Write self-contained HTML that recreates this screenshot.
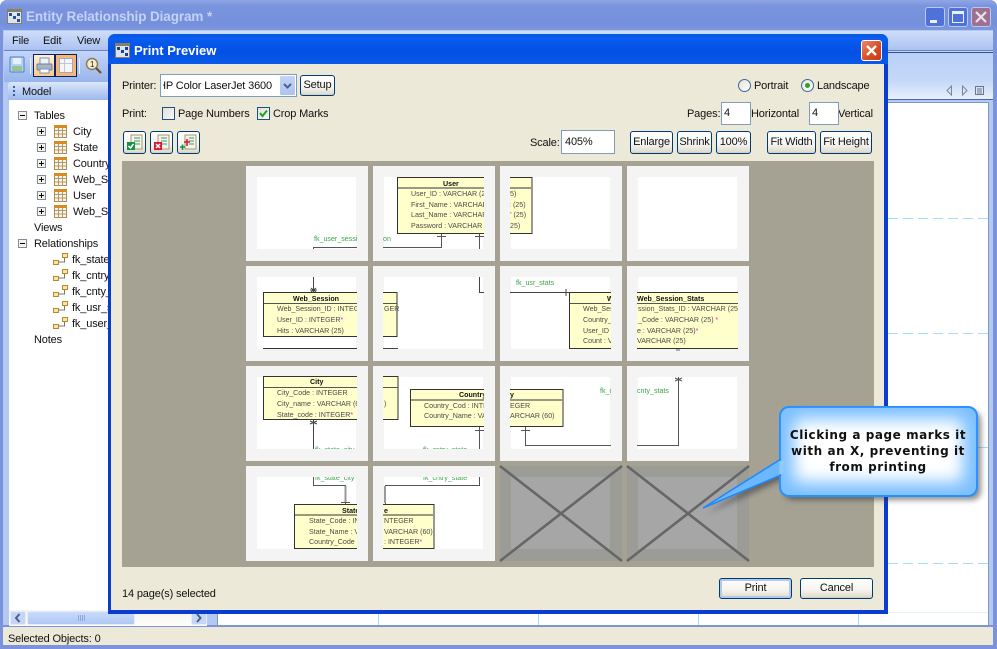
<!DOCTYPE html>
<html><head><meta charset="utf-8">
<style>
html,body{margin:0;padding:0;width:997px;height:649px;overflow:hidden;background:#fff}
*{box-sizing:border-box}
body{font:11px "Liberation Sans",sans-serif;color:#000;position:relative}
.a{position:absolute}
.t{position:absolute;white-space:nowrap;line-height:14px;font-size:11px;letter-spacing:-.15px;color:#111;margin-top:1px}
.b{position:absolute;border:1px solid #003c74;border-radius:3px;background:linear-gradient(#fff,#f4f3ee 60%,#dcd8ca);text-align:center;font-size:11px;letter-spacing:-.15px;color:#111;white-space:nowrap;box-shadow:inset 0 -1px 0 #d6d0c5;padding-top:1px}
.i{position:absolute;background:#fff;border:1px solid #7f9db9;font-size:11px;padding-left:3px;letter-spacing:-.15px;color:#111;padding-top:1px}
svg text{font-family:"Liberation Sans",sans-serif;font-size:7.1px;fill:#4a4a4a}
svg text.h{font-weight:bold;fill:#111;font-size:7.1px}
svg text.g{fill:#3aa548}
</style></head><body>

<!-- main window -->
<div class="a" style="left:0;top:0;width:997px;height:649px;background:#7b93dd;border-radius:7px 7px 0 0"></div>
<div class="a" style="left:0;top:0;width:997px;height:30px;background:linear-gradient(#8fa6e6,#7a94de 20%,#7590dc 80%,#7d97e0);border-radius:7px 7px 0 0"></div>
<svg class="a" style="left:7px;top:9px" width="15" height="15"><rect x=".5" y=".5" width="14" height="14" fill="#dbe4f4" stroke="#8a7f5f"/><rect x="1" y="1" width="13" height="2" fill="#8a7f5f"/><rect x="2" y="4" width="3" height="3" fill="#2a4f8f"/><rect x="6" y="7" width="3" height="3" fill="#2a4f8f"/><rect x="10" y="10" width="3" height="3" fill="#2a4f8f"/><rect x="10" y="4" width="3" height="3" fill="#2a4f8f"/></svg>
<div class="t" style="left:26px;top:8px;font:bold 13.5px/16px 'Liberation Sans',sans-serif;letter-spacing:-.1px;color:#c4d2f4">Entity Relationship Diagram *</div>
<div class="a" style="left:925px;top:7px;width:20px;height:20px;border:1px solid #b9c8f0;border-radius:3px;background:#4f72d8"><div class="a" style="left:4px;top:12px;width:7px;height:3px;background:#e8eefc"></div></div>
<div class="a" style="left:948px;top:7px;width:20px;height:20px;border:1px solid #b9c8f0;border-radius:3px;background:#4f72d8"><div class="a" style="left:3px;top:3px;width:12px;height:12px;border:1px solid #e8eefc;border-top-width:3px"></div></div>
<div class="a" style="left:971px;top:7px;width:20px;height:20px;border:1px solid #b9c8f0;border-radius:3px;background:#a0708f"></div>
<svg class="a" style="left:971px;top:7px" width="20" height="20"><path d="M5 5 L15 15 M15 5 L5 15" stroke="#e8e4ee" stroke-width="2.2"/></svg>

<div class="a" style="left:3px;top:30px;width:990px;height:595px;background:#b4c8f4"></div>
<div class="a" style="left:4px;top:31px;width:989px;height:20px;background:linear-gradient(#cfdef9,#a9c1f1)"></div>
<div class="a" style="left:4px;top:50px;width:989px;height:1px;background:#6a82c0"></div>
<div class="a" style="left:4px;top:51px;width:989px;height:31px;background:linear-gradient(#c4d6f8,#98b4ec)"></div>
<div class="t" style="left:12px;top:33px">File</div>
<div class="t" style="left:43px;top:33px">Edit</div>
<div class="t" style="left:77px;top:33px">View</div>

<!-- toolbar -->
<svg class="a" style="left:9px;top:56px" width="16" height="18"><rect x="1" y="1" width="14" height="15" rx="1" fill="#b4d0f4" stroke="#4f7fc4"/><rect x="3" y="10" width="10" height="5" fill="#9ac38f"/><rect x="4" y="2" width="8" height="6" fill="#e6f0fc"/></svg>
<div class="a" style="left:30px;top:58px;width:1px;height:16px;background:#e8f0ff"></div>
<div class="a" style="left:33px;top:54px;width:22px;height:23px;border:1px solid #0a246a;background:linear-gradient(#fff0d0,#fbc98a)"></div>
<svg class="a" style="left:36px;top:57px" width="17" height="17"><rect x="4" y="1" width="9" height="7" fill="#eef3fa" stroke="#7c93b8"/><rect x="1" y="7" width="15" height="6" rx="1" fill="#a8b4c6" stroke="#6c7f9c"/><rect x="4" y="12" width="9" height="4" fill="#fff" stroke="#7c93b8"/></svg>
<div class="a" style="left:55px;top:54px;width:22px;height:23px;border:1px solid #0a246a;background:#fbb56c"></div>
<div class="a" style="left:59px;top:58px;width:14px;height:15px;border:1px solid #9aa8d4;background:linear-gradient(#b9c6ec,#b9c6ec) 0 4px/100% 1px no-repeat,linear-gradient(#b9c6ec,#b9c6ec) 4px 0/1px 100% no-repeat,#f8f6f2"></div>
<div class="a" style="left:79px;top:58px;width:1px;height:16px;background:#e8f0ff"></div>
<svg class="a" style="left:85px;top:57px" width="17" height="18"><circle cx="7" cy="7" r="5.5" fill="#f4ecd0" stroke="#8a7a50" stroke-width="1.4"/><text x="5" y="10" style="font-size:8px;fill:#222">1</text><path d="M11 11 L16 16" stroke="#7a4a20" stroke-width="2.2"/></svg>

<!-- model panel -->
<div class="a" style="left:8px;top:82px;width:101px;height:18px;background:linear-gradient(#dce7fc,#9db8ee);border-radius:3px 0 0 0"></div>
<div class="a" style="left:13px;top:86px;width:2px;height:2px;background:#3c5aa8;box-shadow:0 4px 0 #3c5aa8,0 8px 0 #3c5aa8"></div>
<div class="t" style="left:22px;top:84px">Model</div>
<div class="a" style="left:9px;top:100px;width:100px;height:510px;background:#fff"></div>

<svg width="0" height="0" style="position:absolute"><defs>
<g id="tb"><rect x=".5" y=".5" width="12" height="12" fill="#faf6e6" stroke="#b08a50"/><rect x="0" y="0" width="13" height="3" fill="#d88a20"/><path d="M.5 5.5H12.5M.5 9H12.5M4.5 3V13M8.5 3V13" stroke="#b09a70" fill="none"/></g>
<g id="rl"><rect x="9.5" y=".5" width="5" height="4" fill="#fbe6a0" stroke="#b8862c"/><rect x=".5" y="7.5" width="5" height="4" fill="#fbe6a0" stroke="#b8862c"/><path d="M11.5 5V9H6" stroke="#777" fill="none"/></g>
<g id="pl"><rect x=".5" y=".5" width="8" height="8" fill="#f4f2ea" stroke="#7f8c9c"/><path d="M2 4.5H7M4.5 2V7" stroke="#000"/></g>
<g id="mi"><rect x=".5" y=".5" width="8" height="8" fill="#f4f2ea" stroke="#7f8c9c"/><path d="M2 4.5H7" stroke="#000"/></g>
</defs></svg>
<svg class="a" style="left:0;top:100px" width="108" height="250">
<use href="#mi" x="18" y="11"/><use href="#mi" x="18" y="139"/>
<use href="#pl" x="37" y="27"/><use href="#pl" x="37" y="43"/><use href="#pl" x="37" y="59"/><use href="#pl" x="37" y="75"/><use href="#pl" x="37" y="91"/><use href="#pl" x="37" y="107"/>
<use href="#tb" x="54" y="25"/><use href="#tb" x="54" y="41"/><use href="#tb" x="54" y="57"/><use href="#tb" x="54" y="73"/><use href="#tb" x="54" y="89"/><use href="#tb" x="54" y="105"/>
<use href="#rl" x="53" y="153"/><use href="#rl" x="53" y="169"/><use href="#rl" x="53" y="185"/><use href="#rl" x="53" y="201"/><use href="#rl" x="53" y="217"/>
</svg>
<div class="t" style="left:34px;top:108px">Tables</div>
<div class="t" style="left:73px;top:124px">City</div>
<div class="t" style="left:73px;top:140px">State</div>
<div class="t" style="left:73px;top:156px">Country</div>
<div class="t" style="left:73px;top:172px">Web_Session</div>
<div class="t" style="left:73px;top:188px">User</div>
<div class="t" style="left:73px;top:204px">Web_Session</div>
<div class="t" style="left:34px;top:220px">Views</div>
<div class="t" style="left:34px;top:236px">Relationships</div>
<div class="t" style="left:72px;top:252px">fk_state_city</div>
<div class="t" style="left:72px;top:268px">fk_cntry_state</div>
<div class="t" style="left:72px;top:284px">fk_cnty_stats</div>
<div class="t" style="left:72px;top:300px">fk_usr_stats</div>
<div class="t" style="left:72px;top:316px">fk_user_session</div>
<div class="t" style="left:34px;top:332px">Notes</div>

<!-- left scrollbar -->
<div class="a" style="left:9px;top:610px;width:198px;height:16px;background:linear-gradient(#f4f4ee,#fdfdfb)"></div>
<div class="a" style="left:10px;top:611px;width:16px;height:14px;background:#c4d6f8;border:1px solid #e4ecfc;border-radius:2px"></div>
<svg class="a" style="left:10px;top:611px" width="16" height="14"><path d="M9.5 3 L6 7 L9.5 11" stroke="#4d6185" stroke-width="2" fill="none"/></svg>
<div class="a" style="left:27px;top:611px;width:108px;height:14px;background:linear-gradient(#c9daf9,#b0c8f6);border:1px solid #e4ecfc;border-radius:2px"></div>
<div class="a" style="left:191px;top:611px;width:16px;height:14px;background:#c4d6f8;border:1px solid #e4ecfc;border-radius:2px"></div>
<svg class="a" style="left:191px;top:611px" width="16" height="14"><path d="M6 3 L9.5 7 L6 11" stroke="#4d6185" stroke-width="2" fill="none"/></svg>
<div class="a" style="left:78px;top:615px;width:7px;height:6px;background:repeating-linear-gradient(90deg,#8ea8dc 0 1px,transparent 1px 2px)"></div>

<!-- right pane -->
<div class="a" style="left:217px;top:52px;width:776px;height:1px;background:#34508c"></div>
<div class="a" style="left:217px;top:53px;width:776px;height:46px;background:linear-gradient(#b9d0f6 0%,#c4d8f8 60%,#e8f0fc)"></div>
<div class="a" style="left:217px;top:99px;width:776px;height:1px;background:#4a66a8"></div>
<div class="a" style="left:217px;top:102px;width:772px;height:524px;background:#fff;border:1px solid #7f9db9"></div>
<svg class="a" style="left:943px;top:84px" width="42" height="13"><path d="M8.500 2 L4 6.500 L8.500 11Z M19.500 2 L24 6.500 L19.500 11Z" fill="none" stroke="#7c8698"/><rect x="32.500" y="2.500" width="8" height="8" fill="none" stroke="#6c7688"/><path d="M34 5H39M34 7H39M34 9H39" stroke="#6c7688"/></svg>
<div class="a" style="left:888px;top:218px;width:100px;height:1px;background:repeating-linear-gradient(90deg,#a4dcff 0 10px,transparent 10px 15px)"></div>
<div class="a" style="left:888px;top:333px;width:100px;height:1px;background:repeating-linear-gradient(90deg,#a4dcff 0 10px,transparent 10px 15px)"></div>
<div class="a" style="left:888px;top:447px;width:100px;height:1px;background:repeating-linear-gradient(90deg,#a4dcff 0 10px,transparent 10px 15px)"></div>
<div class="a" style="left:888px;top:563px;width:100px;height:1px;background:repeating-linear-gradient(90deg,#a4dcff 0 10px,transparent 10px 15px)"></div>
<div class="a" style="left:378px;top:613px;width:1px;height:12px;background:#a4dcff"></div>
<div class="a" style="left:538px;top:613px;width:1px;height:12px;background:#a4dcff"></div>
<div class="a" style="left:698px;top:613px;width:1px;height:12px;background:#a4dcff"></div>
<div class="a" style="left:858px;top:613px;width:1px;height:12px;background:#a4dcff"></div>
<div class="a" style="left:218px;top:612px;width:770px;height:1px;background:#e4f0fc"></div>

<!-- status -->
<div class="a" style="left:3px;top:627px;width:990px;height:18px;background:#ece9d8"></div>
<div class="t" style="left:8px;top:631px">Selected Objects: 0</div>

<!-- dialog -->
<div class="a" style="left:108px;top:34px;width:780px;height:580px;background:#0a3cd0;border-radius:7px 7px 0 0"></div>
<div class="a" style="left:108px;top:34px;width:780px;height:30px;background:linear-gradient(#0a58e0,#0a5cf0 15%,#0450e4 60%,#0a5ae8);border-radius:7px 7px 0 0"></div>
<div class="a" style="left:111px;top:64px;width:773px;height:546px;background:#ece9d8"></div>
<svg class="a" style="left:115px;top:43px" width="15" height="15"><rect x=".5" y=".5" width="14" height="14" fill="#dbe4f4" stroke="#8a7f5f"/><rect x="1" y="1" width="13" height="2" fill="#8a7f5f"/><rect x="2" y="4" width="3" height="3" fill="#1a3f8f"/><rect x="6" y="7" width="3" height="3" fill="#1a3f8f"/><rect x="10" y="10" width="3" height="3" fill="#1a3f8f"/><rect x="10" y="4" width="3" height="3" fill="#1a3f8f"/></svg>
<div class="t" style="left:134px;top:42px;font:bold 13px/16px 'Liberation Sans',sans-serif;letter-spacing:0;color:#fff">Print Preview</div>
<div class="a" style="left:861px;top:40px;width:21px;height:21px;border:1px solid #fff;border-radius:3px;background:linear-gradient(135deg,#e88a68,#d84a20 60%,#c83a18)"></div>
<svg class="a" style="left:861px;top:40px" width="21" height="21"><path d="M6 6 L15 15 M15 6 L6 15" stroke="#fff" stroke-width="2.4"/></svg>

<!-- controls -->
<div class="t" style="left:122px;top:78px">Printer:</div>
<div class="a" style="left:160px;top:74px;width:137px;height:23px;background:#fff;border:1px solid #7f9db9;overflow:hidden"><div class="t" style="left:2px;top:3px;width:109px;overflow:hidden;direction:rtl;text-align:left"><span style="direction:ltr;unicode-bidi:bidi-override">HP Color LaserJet 3600</span></div></div>
<div class="a" style="left:280px;top:76px;width:15px;height:19px;background:linear-gradient(#c4d4f8,#aec2f2);border-radius:1px"></div>
<svg class="a" style="left:280px;top:76px" width="15" height="19"><path d="M4 8 L7.5 11.5 L11 8" stroke="#4d6185" stroke-width="2" fill="none"/></svg>
<div class="b" style="left:300px;top:75px;width:35px;height:21px;line-height:17px">Setup</div>

<div class="t" style="left:122px;top:106px">Print:</div>
<div class="a" style="left:162px;top:107px;width:13px;height:13px;border:1px solid #1c5180;background:linear-gradient(135deg,#e0dfd8,#f8f8f4)"></div>
<div class="t" style="left:178px;top:106px">Page Numbers</div>
<div class="a" style="left:257px;top:107px;width:13px;height:13px;border:1px solid #1c5180;background:linear-gradient(135deg,#e0dfd8,#f8f8f4)"></div>
<svg class="a" style="left:257px;top:107px" width="13" height="13"><path d="M3 6 L5.5 9 L10 3.5" stroke="#21a121" stroke-width="2" fill="none"/></svg>
<div class="t" style="left:273px;top:106px">Crop Marks</div>

<div class="b" style="left:123px;top:131px;width:23px;height:23px"></div>
<div class="b" style="left:150px;top:131px;width:23px;height:23px"></div>
<div class="b" style="left:177px;top:131px;width:23px;height:23px"></div>
<svg class="a" style="left:123px;top:131px" width="78" height="23">
<g><rect x="8" y="4" width="11" height="14" fill="#f4f4ec" stroke="#a89870"/><path d="M11 7H17M11 10H17M11 13H17" stroke="#3a9a6a"/><rect x="4" y="11" width="8" height="8" fill="#189048"/><path d="M5.5 15 L7.5 17 L10.5 13" stroke="#fff" fill="none" stroke-width="1.5"/></g>
<g transform="translate(27)"><rect x="8" y="4" width="11" height="14" fill="#f4f4ec" stroke="#a89870"/><path d="M11 7H17M11 10H17M11 13H17" stroke="#3a9a6a"/><rect x="4" y="11" width="8" height="8" fill="#d81830"/><path d="M6 13 L10 17 M10 13 L6 17" stroke="#fff" stroke-width="1.5"/></g>
<g transform="translate(54)"><rect x="8" y="4" width="11" height="14" fill="#f4f4ec" stroke="#a89870"/><path d="M12 7H17M12 10H17M12 13H17" stroke="#3a9a6a"/><path d="M3 16H8M5.5 13.500V19" stroke="#189048" stroke-width="1.6"/><path d="M7 11H13M10 8V15" stroke="#d81830" stroke-width="1.6"/></g>
</svg>

<div class="t" style="left:530px;top:135px">Scale:</div>
<div class="i" style="left:561px;top:130px;width:54px;height:24px;line-height:20px">405%</div>
<div class="b" style="left:630px;top:131px;width:43px;height:23px;line-height:19px">Enlarge</div>
<div class="b" style="left:677px;top:131px;width:35px;height:23px;line-height:19px">Shrink</div>
<div class="b" style="left:716px;top:131px;width:35px;height:23px;line-height:19px">100%</div>
<div class="b" style="left:767px;top:131px;width:49px;height:23px;line-height:19px">Fit Width</div>
<div class="b" style="left:820px;top:131px;width:52px;height:23px;line-height:19px">Fit Height</div>

<div class="a" style="left:738px;top:79px;width:13px;height:13px;border:1px solid #3c6a94;border-radius:50%;background:linear-gradient(135deg,#e4e2da,#fff)"></div>
<div class="t" style="left:754px;top:78px">Portrait</div>
<div class="a" style="left:801px;top:79px;width:13px;height:13px;border:1px solid #3c6a94;border-radius:50%;background:linear-gradient(135deg,#e4e2da,#fff)"></div>
<div class="a" style="left:805px;top:83px;width:5px;height:5px;border-radius:50%;background:#2aa52a"></div>
<div class="t" style="left:817px;top:78px">Landscape</div>

<div class="t" style="left:687px;top:106px">Pages:</div>
<div class="i" style="left:721px;top:102px;width:30px;height:23px;line-height:19px;padding-left:2px">4</div>
<div class="t" style="left:751px;top:106px">Horizontal</div>
<div class="t" style="left:838px;top:106px">Vertical</div>
<div class="i" style="left:809px;top:102px;width:30px;height:23px;line-height:19px;padding-left:2px">4</div>

<div class="a" style="left:122px;top:161px;width:752px;height:406px;background:#a5a294"></div>

<!-- preview -->
<svg class="a" style="left:0;top:0" width="997" height="649">
<defs>
<clipPath id="c00"><rect x="257" y="177" width="100" height="72"/></clipPath>
<clipPath id="c01"><rect x="383" y="177" width="101" height="72"/></clipPath>
<clipPath id="c02"><rect x="510" y="177" width="101" height="72"/></clipPath>
<clipPath id="c10"><rect x="257" y="277" width="100" height="72"/></clipPath>
<clipPath id="c11"><rect x="383" y="277" width="101" height="72"/></clipPath>
<clipPath id="c12"><rect x="510" y="277" width="101" height="72"/></clipPath>
<clipPath id="c13"><rect x="637" y="277" width="101" height="74"/></clipPath>
<clipPath id="c20"><rect x="257" y="376" width="100" height="73"/></clipPath>
<clipPath id="c21"><rect x="383" y="376" width="101" height="73"/></clipPath>
<clipPath id="c22"><rect x="510" y="377" width="101" height="72"/></clipPath>
<clipPath id="c23"><rect x="637" y="377" width="101" height="72"/></clipPath>
<clipPath id="c30"><rect x="257" y="477" width="100" height="72"/></clipPath>
<clipPath id="c31"><rect x="383" y="477" width="101" height="72"/></clipPath>
</defs>
<!-- pages -->
<g fill="#f4f4f4">
<rect x="246" y="166" width="122" height="95"/><rect x="373" y="166" width="122" height="95"/><rect x="500" y="166" width="122" height="95"/><rect x="627" y="166" width="122" height="95"/>
<rect x="246" y="266" width="122" height="95"/><rect x="373" y="266" width="122" height="95"/><rect x="500" y="266" width="122" height="95"/><rect x="627" y="266" width="122" height="95"/>
<rect x="246" y="366" width="122" height="95"/><rect x="373" y="366" width="122" height="95"/><rect x="500" y="366" width="122" height="95"/><rect x="627" y="366" width="122" height="95"/>
<rect x="246" y="466" width="122" height="95"/><rect x="373" y="466" width="122" height="95"/>
</g>
<g fill="#fff">
<rect x="257" y="177" width="99" height="72"/><rect x="384" y="177" width="99" height="72"/><rect x="511" y="177" width="99" height="72"/><rect x="638" y="177" width="99" height="72"/>
<rect x="257" y="277" width="99" height="72"/><rect x="384" y="277" width="99" height="72"/><rect x="511" y="277" width="99" height="72"/><rect x="638" y="277" width="99" height="72"/>
<rect x="257" y="377" width="99" height="72"/><rect x="384" y="377" width="99" height="72"/><rect x="511" y="377" width="99" height="72"/><rect x="638" y="377" width="99" height="72"/>
<rect x="257" y="477" width="99" height="72"/><rect x="384" y="477" width="99" height="72"/>
</g>
<!-- crossed pages -->
<rect x="500" y="466" width="122" height="95" fill="#9c9c96"/><rect x="511" y="477" width="99" height="72" fill="#a6a6a6"/>
<rect x="627" y="466" width="122" height="95" fill="#9c9c96"/><rect x="638" y="477" width="99" height="72" fill="#a6a6a6"/>
<path d="M500 466 L622 561 M622 466 L500 561 M627 466 L749 561 M749 466 L627 561" stroke="#666" stroke-width="2.6"/>

<!-- row 0 -->
<g clip-path="url(#c00)"><text class="g" x="314" y="241">fk_user_session</text><path d="M313.500 249V247.500H357" stroke="#555" fill="none"/></g>
<g clip-path="url(#c01)">
<rect x="397.500" y="177.500" width="120" height="56" fill="#ffffcc" stroke="#333"/><rect x="398" y="187" width="120" height="2" fill="#999980"/>
<text class="h" x="443" y="186">User</text>
<text x="411" y="196">User_ID : VARCHAR (25)</text><text x="411" y="207">First_Name : VARCHAR (25)</text><text x="411" y="217">Last_Name : VARCHAR (25)</text><text x="411" y="228">Password : VARCHAR (25)</text>
<path d="M383 247.500H441.500V234M437 236.500H446M479.500 234V249M475 236.500H484" stroke="#555" fill="none"/>
<text class="g" x="383" y="241">on</text></g>
<g clip-path="url(#c02)">
<rect x="480" y="177.500" width="52" height="56" fill="#ffffcc" stroke="#333"/><rect x="480" y="187" width="52" height="2" fill="#999980"/>
<text x="510" y="196">5)</text><text x="509" y="207">: (25)</text><text x="509" y="217">" (25)</text><text x="510" y="228">25)</text></g>

<!-- row 1 -->
<g clip-path="url(#c10)">
<path d="M313.500 277V292M310 290H317M311 288L316 292M316 288L311 292" stroke="#444" fill="none"/>
<rect x="263.500" y="292.500" width="120" height="44" fill="#ffffcc" stroke="#333"/><path d="M264 303.500H384" stroke="#555"/>
<text class="h" x="293" y="301">Web_Session</text>
<text x="277" y="311">Web_Session_ID : INTEGER</text><text x="277" y="322">User_ID : INTEGER<tspan style="fill:#e020c0">*</tspan></text><text x="277" y="333">Hits : VARCHAR (25)</text>
<path d="M263.500 349V348.500H357" stroke="#333" fill="none"/></g>
<g clip-path="url(#c11)">
<rect x="360" y="292.500" width="37" height="44" fill="#ffffcc" stroke="#333"/><path d="M360 303.500H397" stroke="#555"/>
<text x="384" y="311">GER</text>
<path d="M383 348.500H397.500V349M479.500 277V292.500H484" stroke="#444" fill="none"/></g>
<g clip-path="url(#c12)">
<text class="g" x="516" y="285">fk_usr_stats</text>
<path d="M510 292.500H569M566 289V296" stroke="#444" fill="none"/>
<rect x="569.500" y="292.500" width="80" height="56" fill="#ffffcc" stroke="#333"/><path d="M570 303.500H650" stroke="#555"/>
<text class="h" x="607" y="301">Web</text>
<text x="583" y="311">Web_Session_Stats_ID</text><text x="583" y="322">Country_Code : V</text><text x="583" y="333">User_ID : V</text><text x="583" y="343">Count : VARCHAR</text></g>
<g clip-path="url(#c13)">
<rect x="620" y="292.500" width="130" height="56" fill="#ffffcc" stroke="#333"/><path d="M620 303.500H750" stroke="#555"/>
<text class="h" x="637" y="301">Web_Session_Stats</text>
<text x="638" y="311">ssion_Stats_ID : VARCHAR (25)</text><text x="638" y="322">_Code : VARCHAR (25) <tspan style="fill:#e020c0">*</tspan></text><text x="637" y="333">e : VARCHAR (25)<tspan style="fill:#e020c0">*</tspan></text><text x="637" y="343">VARCHAR (25)</text>
<path d="M676 350H680" stroke="#666"/></g>

<!-- row 2 -->
<g clip-path="url(#c20)">
<rect x="263.500" y="376.500" width="120" height="43" fill="#ffffcc" stroke="#333"/><path d="M264 387.500H384" stroke="#555"/>
<text class="h" x="310" y="384">City</text>
<text x="277" y="395">City_Code : INTEGER</text><text x="277" y="406">City_name : VARCHAR (60)</text><text x="277" y="417">State_code : INTEGER<tspan style="fill:#e020c0">*</tspan></text>
<path d="M313.500 420V449M310 421L317 424M317 421L310 424" stroke="#444" fill="none"/>
<text class="g" x="315" y="452">fk_state_city</text></g>
<g clip-path="url(#c21)">
<rect x="360" y="376.500" width="38" height="43" fill="#ffffcc" stroke="#333"/><path d="M360 387.500H398" stroke="#555"/>
<text x="384" y="406">)</text>
<rect x="410.500" y="389.500" width="90" height="37" fill="#ffffcc" stroke="#333"/><rect x="411" y="399" width="90" height="2" fill="#999980"/>
<text class="h" x="459" y="397">Country</text>
<text x="424" y="408">Country_Cod : INTEGER</text><text x="424" y="418">Country_Name : VARCHAR</text>
<path d="M479.500 427V449M475 430.500H484" stroke="#555" fill="none"/>
<text class="g" x="423" y="452">fk_cntry_state</text></g>
<g clip-path="url(#c22)">
<rect x="490" y="389.500" width="73" height="37" fill="#ffffcc" stroke="#333"/><rect x="490" y="399" width="73" height="2" fill="#999980"/>
<text class="h" x="510" y="397">y</text><text x="510" y="408">EGER</text><text x="510" y="418">ARCHAR (60)</text>
<path d="M525.500 427V445.500H611M521 430.500H530" stroke="#555" fill="none"/>
<text class="g" x="600" y="393">fk_cnty_stats</text></g>
<g clip-path="url(#c23)">
<text class="g" x="637" y="393">cnty_stats</text>
<path d="M637 445.500H678.500V377M675 378L682 381M682 378L675 381" stroke="#555" fill="none"/></g>

<!-- row 3 -->
<g clip-path="url(#c30)">
<text class="g" x="315" y="480">fk_state_city</text>
<path d="M313.500 477V485.500H345.500V504" stroke="#555" fill="none"/><path d="M345.500 486V503" stroke="#999" stroke-width="2"/><path d="M341 502.500H350" stroke="#555"/>
<rect x="294.500" y="504.500" width="120" height="44" fill="#ffffcc" stroke="#333"/><rect x="295" y="514" width="120" height="2" fill="#999980"/>
<text class="h" x="342" y="513">State</text>
<text x="309" y="523">State_Code : INTEGER</text><text x="309" y="534">State_Name : VARCHAR (60)</text><text x="309" y="544">Country_Code : INTEGER</text></g>
<g clip-path="url(#c31)">
<text class="g" x="423" y="480">fk_cntry_state</text>
<path d="M479.500 477V485.500H385.500V504" stroke="#555" fill="none"/><path d="M385 486V503" stroke="#999" stroke-width="2"/>
<rect x="360" y="504.500" width="74" height="44" fill="#ffffcc" stroke="#333"/><rect x="360" y="514" width="74" height="2" fill="#999980"/>
<text class="h" x="384" y="513">e</text>
<text x="384" y="523">NTEGER</text><text x="384" y="534">VARCHAR (60)</text><text x="384" y="544">: INTEGER<tspan style="fill:#e020c0">*</tspan></text></g>
</svg>

<div class="t" style="left:122px;top:586px">14 page(s) selected</div>
<div class="b" style="left:719px;top:578px;width:73px;height:21px;line-height:17px;box-shadow:inset 0 0 0 2px #b4c8ec">Print</div>
<div class="b" style="left:800px;top:578px;width:73px;height:21px;line-height:17px">Cancel</div>

<!-- callout -->
<svg class="a" style="left:690px;top:395px" width="307" height="130">
<defs>
<filter id="bl" x="-20%" y="-20%" width="140%" height="140%"><feGaussianBlur stdDeviation="3"/></filter>
<filter id="bi" x="-20%" y="-20%" width="140%" height="140%"><feGaussianBlur stdDeviation="8"/></filter>
<clipPath id="bc"><rect x="90" y="12" width="197" height="89" rx="9"/></clipPath>
</defs>
<path d="M18 118 L94 68 L94 84 Z" fill="#333" opacity=".55" filter="url(#bl)"/>
<rect x="94" y="16" width="197" height="89" rx="9" fill="#333" opacity=".55" filter="url(#bl)"/>
<rect x="90" y="12" width="197" height="89" rx="9" fill="#7cc0ff" stroke="#2a90ff" stroke-width="2"/>
<g clip-path="url(#bc)"><rect x="104" y="24" width="169" height="63" rx="6" fill="#fff" filter="url(#bi)"/></g>
<path d="M90 64 L13 113 L90 80 Z" fill="#6cb8ff"/>
<path d="M91 64 L13 113 L91 80" fill="none" stroke="#1f88ff" stroke-width="1.500"/>
<rect x="89.500" y="66" width="4" height="13" fill="#92cbff"/>
</svg>
<div class="a" style="left:780px;top:427px;width:196px;text-align:center;font:bold 12px/16px 'DejaVu Sans',sans-serif;letter-spacing:.55px;color:#111">Clicking a page marks it<br>with an X, preventing it<br>from printing</div>

</body></html>
